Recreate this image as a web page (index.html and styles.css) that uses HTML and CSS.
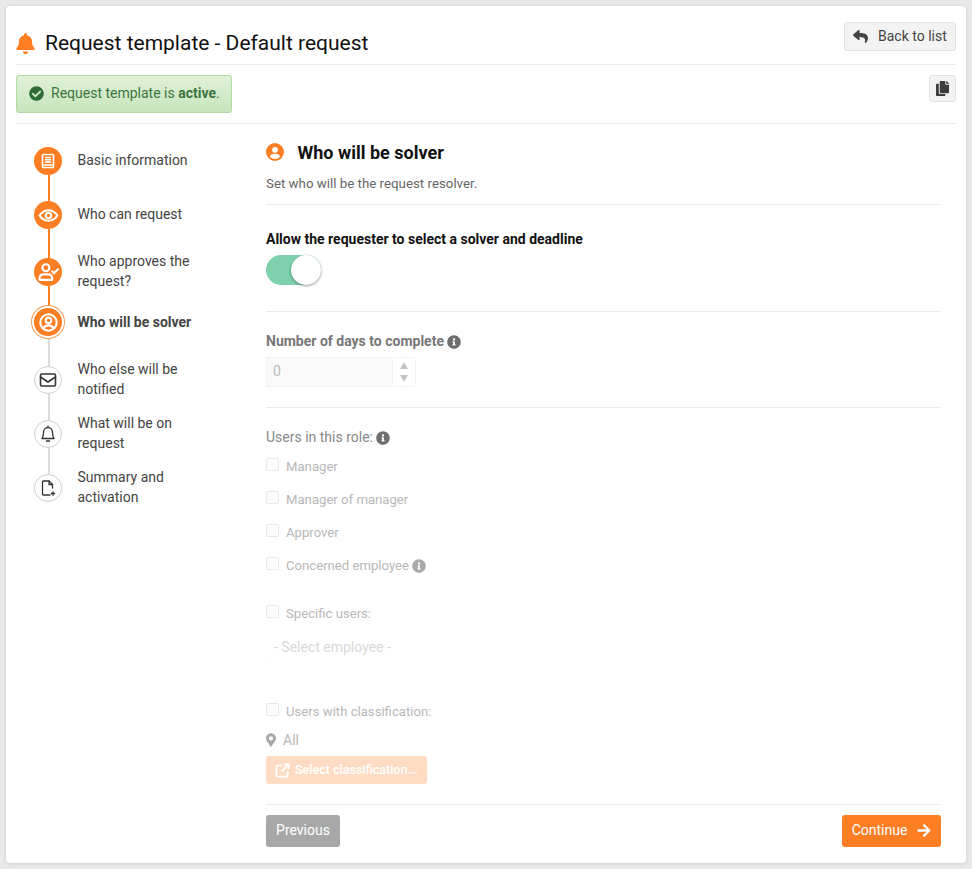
FILE: index.html
```html
<!DOCTYPE html>
<html lang="en">
<head>
<meta charset="utf-8">
<title>Request template - Default request</title>
<link rel="stylesheet" href="styles.css">
</head>
<body>
<svg class="defs" width="0" height="0" aria-hidden="true">
  <symbol id="i-info" viewBox="0 0 512 512"><path d="M256 8C119.043 8 8 119.083 8 256c0 136.997 111.043 248 248 248s248-111.003 248-248C504 119.083 392.957 8 256 8zm0 110c23.196 0 42 18.804 42 42s-18.804 42-42 42-42-18.804-42-42 18.804-42 42-42zm56 254c0 6.627-5.373 12-12 12h-88c-6.627 0-12-5.373-12-12v-24c0-6.627 5.373-12 12-12h12v-64h-12c-6.627 0-12-5.373-12-12v-24c0-6.627 5.373-12 12-12h64c6.627 0 12 5.373 12 12v100h12c6.627 0 12 5.373 12 12v24z"/></symbol>
</svg>
<main class="card">
  <header class="head">
    <h1 class="title">
      <svg class="bell" viewBox="0 0 448 512"><path d="M224 512c35.32 0 63.97-28.65 63.97-64H160.03c0 35.35 28.65 64 63.97 64zm215.39-149.71c-19.32-20.76-55.47-51.99-55.47-154.29 0-77.7-54.48-139.9-127.94-155.16V32c0-17.67-14.32-32-31.98-32s-31.98 14.33-31.98 32v20.84C118.56 68.1 64.08 130.3 64.08 208c0 102.3-36.15 133.53-55.47 154.29-6 6.45-8.66 14.16-8.61 21.71.11 16.4 12.98 32 32.1 32h383.8c19.12 0 32-15.6 32.1-32 .05-7.55-2.61-15.27-8.61-21.71z"/></svg>
      Request template - Default request
    </h1>
    <button class="btn-light back" type="button">
      <svg class="reply" viewBox="0 0 512 512"><path d="M8.309 189.836L184.313 37.851C199.719 24.546 224 35.347 224 56.015v80.053c160.629 1.839 288 34.032 288 186.258 0 61.441-39.581 122.309-83.333 154.132-13.653 9.931-33.111-2.533-28.077-18.631 45.344-145.012-21.507-183.51-176.59-185.742V360c0 20.7-24.3 31.453-39.687 18.164l-176.004-152c-11.071-9.562-11.086-26.753 0-36.328z"/></svg>
      Back to list
    </button>
  </header>

  <section class="status">
    <div class="alert">
      <svg class="check" viewBox="0 0 512 512"><path d="M504 256c0 136.967-111.033 248-248 248S8 392.967 8 256 119.033 8 256 8s248 111.033 248 248zM227.314 387.314l184-184c6.248-6.248 6.248-16.379 0-22.627l-22.627-22.627c-6.248-6.249-16.379-6.249-22.628 0L216 308.118l-70.059-70.059c-6.248-6.248-16.379-6.248-22.628 0l-22.627 22.627c-6.248 6.248-6.248 16.379 0 22.627l104 104c6.249 6.249 16.379 6.249 22.628.001z"/></svg>
      <span class="alert-text">Request template is <b>active</b>.</span>
    </div>
    <button class="btn-light copy" type="button" aria-label="Copy">
      <svg viewBox="0 0 448 512"><path d="M320 448v40c0 13.255-10.745 24-24 24H24c-13.255 0-24-10.745-24-24V120c0-13.255 10.745-24 24-24h72v296c0 30.879 25.121 56 56 56h168zm0-344V0H152c-13.255 0-24 10.745-24 24v368c0 13.255 10.745 24 24 24h272c13.255 0 24-10.745 24-24V128H344c-13.2 0-24-10.8-24-24zm120.971-31.029L375.029 7.029A24 24 0 0 0 358.059 0H352v96h96v-6.059a24 24 0 0 0-7.029-16.97z"/></svg>
    </button>
  </section>

  <div class="layout">
    <ol class="steps">
      <li class="step done gap-26">
        <span class="dot"><svg viewBox="0 0 18 18" class="ico-stroke"><rect x="3.500" y="2.500" width="11" height="13" rx=".8"/><path d="M6.500 5.500h5M6.500 7.800h5M6.500 10.100h5"/><path d="M3.500 13h11"/></svg></span>
        <span class="label">Basic information</span>
      </li>
      <li class="step done gap-29">
        <span class="dot"><svg viewBox="0 0 20 20" class="ico-stroke eye"><path d="M1.500 10c2.300-3.500 5.100-5 8.500-5s6.200 1.500 8.500 5c-2.300 3.500-5.100 5-8.500 5s-6.200-1.500-8.500-5z"/><circle cx="10" cy="10" r="2.600"/></svg></span>
        <span class="label">Who can request</span>
      </li>
      <li class="step done gap-22">
        <span class="dot"><svg viewBox="0 0 20 20" class="ico-stroke eye"><circle cx="7.500" cy="5.500" r="3.300"/><path d="M1.500 17v-1.200c0-2.500 1.800-4 4-4h4c2.200 0 4 1.500 4 4V17z"/><path d="M13.500 9l1.800 1.800L19 7"/></svg></span>
        <span class="label">Who approves the request?</span>
      </li>
      <li class="step current gap-30">
        <span class="dot"><svg viewBox="0 0 20 20" class="ico-stroke eye"><circle cx="10" cy="10" r="7.800"/><circle cx="10" cy="8" r="2.600"/><path d="M5.500 15c1-1.700 2.600-2.300 4.500-2.300s3.500.6 4.500 2.300"/></svg></span>
        <span class="label strong">Who will be solver</span>
      </li>
      <li class="step todo gap-26">
        <span class="dot"><svg viewBox="0 0 18 18" class="ico-stroke"><rect x="1.500" y="3" width="15" height="12" rx="1.500"/><path d="M1.500 6l7.500 5 7.500-5"/></svg></span>
        <span class="label">Who else will be notified</span>
      </li>
      <li class="step todo gap-26">
        <span class="dot"><svg viewBox="0 0 18 18" class="ico-stroke thin"><path d="M9 1v1.500M3 13.500c1-1.200 1.500-2.500 1.500-6 0-2.800 2-5 4.500-5s4.500 2.200 4.500 5c0 3.500.5 4.800 1.500 6z"/><path d="M7.500 16h3"/></svg></span>
        <span class="label">What will be on request</span>
      </li>
      <li class="step todo last">
        <span class="dot"><svg viewBox="0 0 18 18" class="ico-stroke thin"><path d="M13.500 9V5.500L10 2H4.500a1 1 0 0 0-1 1v12a1 1 0 0 0 1 1H11"/><path d="M10 2v3.500h3.500M14 12.800v3.400M12.300 14.500h3.400"/></svg></span>
        <span class="label">Summary and activation</span>
      </li>
    </ol>

    <div class="content">
      <div class="section-head">
        <h2 class="section-title">
          <svg class="user-ico" viewBox="0 0 18 18"><circle cx="9" cy="9" r="9" class="f-orange"/><circle cx="9" cy="6.800" r="2.900" class="f-white"/><path d="M3.800 13.200c.8-1.700 2.800-2.500 5.200-2.500s4.400.8 5.200 2.500C13.900 14.700 11.600 15.800 9 15.800s-4.900-1.100-5.200-2.600z" class="f-white"/></svg>
          Who will be solver
        </h2>
        <p class="section-sub">Set who will be the request resolver.</p>
      </div>

      <div class="block toggle-block">
        <div class="strong-label">Allow the requester to select a solver and deadline</div>
        <div class="toggle"><span class="thumb"></span></div>
      </div>

      <div class="block days-block">
        <div class="muted-label">Number of days to complete <svg class="info"><use href="#i-info"/></svg></div>
        <div class="spinner">
          <span class="spin-value">0</span>
          <span class="spin-arrows"><i class="up"></i><i class="down"></i></span>
        </div>
      </div>

      <div class="roles">
        <div class="role-title">Users in this role: <svg class="info"><use href="#i-info"/></svg></div>
        <label class="check-row"><span class="box"></span>Manager</label>
        <label class="check-row"><span class="box"></span>Manager of manager</label>
        <label class="check-row"><span class="box"></span>Approver</label>
        <label class="check-row"><span class="box"></span>Concerned employee <svg class="info pale"><use href="#i-info"/></svg></label>
        <label class="check-row specific"><span class="box"></span>Specific users:</label>
        <div class="select">- Select employee -</div>
        <label class="check-row classification"><span class="box"></span>Users with classification:</label>
        <div class="location">
          <svg viewBox="0 0 384 512"><path d="M172.268 501.67C26.97 291.031 0 272.556 0 192 0 85.961 85.961 0 192 0s192 85.961 192 192c0 80.556-26.97 99.031-172.268 309.67-9.535 13.774-29.93 13.773-39.464 0zM192 272c44.183 0 80-35.817 80-80s-35.817-80-80-80-80 35.817-80 80 35.817 80 80 80z"/></svg>
          All
        </div>
        <button class="select-class" type="button">
          <svg viewBox="0 0 16 16"><path d="M7 2.500H3a1.500 1.500 0 0 0-1.500 1.500v9A1.500 1.500 0 0 0 3 14.500h9a1.500 1.500 0 0 0 1.500-1.500V9"/><path d="M9.500 1.500h5v5M14 2L7 9"/></svg>
          <span class="select-class-text">Select classification...</span>
        </button>
      </div>

      <footer class="actions">
        <button class="btn-prev" type="button">Previous</button>
        <button class="btn-next" type="button">Continue
          <svg viewBox="0 0 448 512"><path d="M190.5 66.9l22.2-22.2c9.4-9.4 24.6-9.4 33.9 0L441 239c9.400 9.400 9.400 24.600 0 33.900L246.600 467.300c-9.400 9.400-24.600 9.400-33.900 0l-22.200-22.200c-9.500-9.500-9.300-25 .4-34.300L311.400 296H24c-13.300 0-24-10.700-24-24v-32c0-13.300 10.700-24 24-24h287.400L190.900 101.200c-9.800-9.300-10-24.800-.4-34.300z"/></svg>
        </button>
      </footer>
    </div>
  </div>
</main>
</body>
</html>
```

FILE: styles.css
```css
* { box-sizing: border-box; }
html, body { margin: 0; padding: 0; }
body {
  width: 972px;
  height: 869px;
  padding: 6px;
  overflow: hidden;
  background: #e9e9e9;
  font-family: Roboto, "Liberation Sans", sans-serif;
  font-size: 14px;
  color: #444;
}
.defs { position: absolute; }
button { font-family: inherit; cursor: pointer; }

.card {
  width: 960px;
  height: 857px;
  padding: 0 10px;
  background: #fff;
  border-radius: 4px;
  box-shadow: 0 1px 4px rgba(0, 0, 0, .12);
}

.head {
  height: 59px;
  display: flex;
  align-items: flex-start;
  justify-content: space-between;
  border-bottom: 1px solid #eaeaea;
}
.title {
  margin: 22px 0 0;
  display: flex;
  align-items: center;
  gap: 10px;
  height: 30px;
  font-size: 21px;
  font-weight: 400;
  color: #111;
}
.bell { width: 19px; height: 21px; fill: #fd7e23; }

.btn-light {
  background: #f3f3f3;
  border: 1px solid #e2e2e2;
  border-radius: 3px;
  color: #444;
}
.back {
  margin-top: 16px;
  width: 112px;
  height: 29px;
  padding: 0 0 2px 8px;
  display: flex;
  align-items: center;
  gap: 10px;
  font-size: 14px;
}
.reply { width: 15px; height: 15px; margin-top: 2px; fill: #444; }

.status {
  height: 59px;
  padding-top: 10px;
  display: flex;
  justify-content: space-between;
  align-items: flex-start;
  border-bottom: 1px solid #eaeaea;
}
.alert {
  width: 216px;
  height: 38px;
  padding-left: 12px;
  display: flex;
  align-items: center;
  gap: 7px;
  background: linear-gradient(#dff0d8, #c8e5bc);
  border: 1px solid #b2dba1;
  border-radius: 3px;
  color: #3c763d;
}
.alert-text { margin-top: -2px; }
.check { width: 15px; height: 15px; margin-top: -2px; fill: #2f6b34; }
.copy {
  width: 27px;
  height: 27px;
  padding: 0;
  display: flex;
  align-items: center;
  justify-content: center;
}
.copy svg { width: 13px; height: 15px; fill: #3d3d3d; }

.layout { display: flex; }

.steps {
  width: 250px;
  margin: 0;
  padding: 23px 0 0 18px;
  list-style: none;
}
.step {
  position: relative;
  height: 28px;
  display: flex;
  align-items: center;
}
.gap-22 { margin-bottom: 22px; }
.gap-26 { margin-bottom: 26px; }
.gap-29 { margin-bottom: 29px; }
.gap-30 { margin-bottom: 30px; }
.dot {
  position: relative;
  z-index: 1;
  flex: none;
  width: 28px;
  height: 28px;
  display: flex;
  align-items: center;
  justify-content: center;
  border-radius: 50%;
}
.dot svg { width: 18px; height: 18px; }
.dot svg.eye { width: 21px; height: 21px; }
.ico-stroke {
  fill: none;
  stroke-width: 1.6;
  stroke-linejoin: round;
  stroke-linecap: round;
}
.ico-stroke.eye { stroke-width: 2; }
.ico-stroke.thin { stroke-width: 1.3; }
.done .dot, .current .dot { background: #fd7e23; }
.done .ico-stroke, .current .ico-stroke { stroke: #fff; }
.current .dot { box-shadow: 0 0 0 2px #fff, 0 0 0 3px #fb9a55; }
.todo .dot { background: #fff; border: 1px solid #cfcfcf; }
.todo .ico-stroke { stroke: #333; }
.step::after {
  content: "";
  position: absolute;
  left: 14px;
  top: 28px;
  width: 2px;
  height: 30px;
  background: #dcdcdc;
}
.done::after { background: #fd7e23; width: 2px; }
.last::after { display: none; }
.label {
  width: 130px;
  margin: -2px 0 0 15.500px;
  line-height: 20px;
  color: #444;
}
.strong { font-weight: 700; margin-top: 0; }

.content { width: 675px; }
.section-head {
  height: 81px;
  padding-top: 18px;
  border-bottom: 1px solid #eaeaea;
}
.section-title {
  margin: 0;
  display: flex;
  align-items: center;
  gap: 13.500px;
  height: 20px;
  font-size: 18px;
  font-weight: 700;
  color: #111;
}
.user-ico { width: 18px; height: 18px; }
.f-orange { fill: #fd7e23; }
.f-white { fill: #fff; }
.section-sub {
  margin: 14px 0 0;
  font-size: 13.300px;
  line-height: 16px;
  color: #666;
}

.block { border-bottom: 1px solid #eaeaea; }
.toggle-block { height: 107px; padding-top: 26px; }
.strong-label {
  font-weight: 700;
  line-height: 17px;
  color: #111;
}
.toggle {
  position: relative;
  width: 55px;
  height: 30px;
  margin-top: 7px;
  background: #7fd1ad;
  border-radius: 15px;
}
.thumb {
  position: absolute;
  right: 0;
  top: 0;
  width: 30px;
  height: 30px;
  background: #fff;
  border-radius: 50%;
  box-shadow: 0 1px 3px rgba(0, 0, 0, .4);
}

.days-block { height: 96px; padding-top: 21px; }
.muted-label {
  display: flex;
  align-items: center;
  gap: 3.500px;
  font-weight: 700;
  line-height: 17px;
  color: #777;
}
.info { width: 14px; height: 14px; fill: #6d6d6d; }
.info.pale { fill: #a9a9a9; }
.spinner {
  width: 150px;
  height: 30px;
  margin-top: 7px;
  display: flex;
  background: #fafafa;
  border: 1px solid #f3f3f3;
}
.spin-value {
  flex: 1;
  padding-left: 6px;
  line-height: 26px;
  color: #b9b9b9;
}
.spin-arrows {
  width: 23px;
  display: flex;
  flex-direction: column;
  align-items: center;
  justify-content: center;
  gap: 6px;
  background: #fff;
  border-left: 1px solid #f3f3f3;
}
.spin-arrows i { width: 0; height: 0; border: 4.500px solid transparent; }
.spin-arrows .up { border-top: 0; border-bottom: 7px solid #c4c4c4; }
.spin-arrows .down { border-bottom: 0; border-top: 7px solid #c4c4c4; }

.roles { height: 397px; padding-top: 21px; border-bottom: 1px solid #eaeaea; }
.role-title {
  display: flex;
  align-items: center;
  gap: 3.500px;
  line-height: 17px;
  color: #888;
}
.check-row {
  height: 33px;
  display: flex;
  align-items: center;
  font-size: 13.150px;
  color: #b8b8b8;
}
.role-title + .check-row { margin-top: -4px; height: 41px; padding-top: 8px; }
.check-row .info { margin-left: 3px; }
.box {
  flex: none;
  width: 13px;
  height: 13px;
  margin: -4px 7px 0 0;
  background: #fcfcfc;
  border: 1px solid #e9e9e9;
  border-radius: 2px;
}
.specific { margin-top: 15px; }
.select {
  width: 400px;
  height: 34px;
  padding-left: 7px;
  border: 1px solid #fdfdfd;
  border-radius: 3px;
  font-size: 14px;
  line-height: 32px;
  color: #d8d8d8;
}
.classification { margin-top: 31px; }
.location {
  height: 25px;
  margin-top: -1px;
  display: flex;
  align-items: center;
  gap: 7px;
  color: #b8b8b8;
}
.location svg { width: 10px; height: 14px; fill: #a9a9a9; }
.select-class {
  width: 161px;
  height: 28px;
  margin-top: 4px;
  padding: 0 0 0 9px;
  display: flex;
  align-items: center;
  gap: 5px;
  background: #fedcc4;
  border: 0;
  border-radius: 3px;
  font-size: 12.500px;
  font-weight: 500;
  color: #fff;
}
.select-class-text { margin-top: -2px; }
.select-class svg {
  width: 15px;
  height: 15px;
  fill: none;
  stroke: #fff;
  stroke-width: 2;
}

.actions {
  padding-top: 10px;
  display: flex;
  justify-content: space-between;
}
.btn-prev, .btn-next {
  height: 32px;
  padding: 0 0 3px;
  border: 0;
  border-radius: 3px;
  font-size: 14px;
  font-weight: 400;
  color: #fff;
}
.btn-prev { width: 74px; background: #a8a8a8; }
.btn-next {
  width: 99px;
  display: flex;
  align-items: center;
  justify-content: center;
  gap: 10px;
  background: #fd7e23;
}
.btn-next svg { width: 14px; height: 15px; margin-top: 2px; fill: #fff; }
```
